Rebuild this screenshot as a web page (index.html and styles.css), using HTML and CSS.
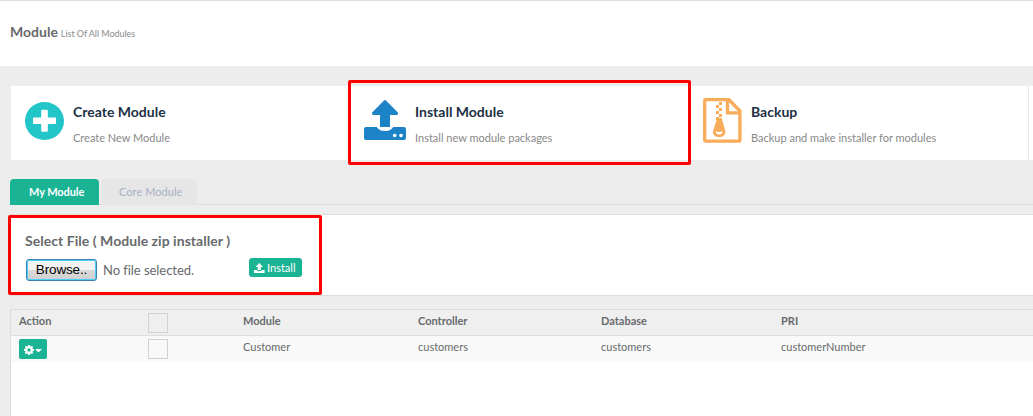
FILE: index.html
```html
<!DOCTYPE html>
<html lang="en">
<head>
<meta charset="utf-8">
<title>Module</title>
<link rel="stylesheet" href="styles.css">
</head>
<body>
<header class="page-header">
  <h1 class="page-title">Module</h1>
  <span class="page-subtitle">List Of All Modules</span>
</header>
<main class="content">
  <section class="cards">
    <article class="card">
      <svg class="card-icon icon-create" width="39" height="38" viewBox="0 0 39 39" preserveAspectRatio="none">
        <circle cx="19.5" cy="19.5" r="19.5" fill="#23c6c8"/>
        <path d="M17.200 8h4.600a1 1 0 0 1 1 1v7H30a1 1 0 0 1 1 1v4.600a1 1 0 0 1-1 1h-7.200V29.500a1 1 0 0 1-1 1h-4.600a1 1 0 0 1-1-1v-6.900H9a1 1 0 0 1-1-1V17a1 1 0 0 1 1-1h7.200V9a1 1 0 0 1 1-1z" fill="#fff"/>
      </svg>
      <div class="card-text">
        <h2 class="card-title">Create Module</h2>
        <p class="card-desc">Create New Module</p>
      </div>
    </article>
    <article class="card">
      <svg class="card-icon icon-install" width="42" height="40" viewBox="0 0 42 40">
        <g fill="#1c84c6">
          <path d="M20 .4Q21 -.4 22 .4L33.600 12.200Q35 14.500 32.600 15H26v12q0 4-5 4t-5-4V15H9.400Q7 14.500 8.400 12.200z"/>
          <path d="M2 27h11q2.500 4 8 4t8-4h11a2 2 0 0 1 2 2v9a2 2 0 0 1-2 2H2a2 2 0 0 1-2-2v-9a2 2 0 0 1 2-2z"/>
        </g>
        <path d="M13 27H29q-2.500 4-8 4t-8-4z" fill="#fff"/>
        <circle cx="30.700" cy="35.500" r="1.800" fill="#fff"/>
        <circle cx="37" cy="35.500" r="1.800" fill="#fff"/>
      </svg>
      <div class="card-text">
        <h2 class="card-title">Install Module</h2>
        <p class="card-desc">Install new module packages</p>
      </div>
      <div class="highlight highlight-card"></div>
    </article>
    <article class="card">
      <svg class="card-icon icon-backup" width="39" height="45" viewBox="0 0 39 45">
        <path d="M2.500 1.700h23.500L36.900 13v29.200a1 1 0 0 1-1 1H2.700a1 1 0 0 1-1-1V2.500a.8.8 0 0 1 .8-.8z" fill="#fff" stroke="#f8ac59" stroke-width="3.300"/>
        <path d="M24.500 2v12.800H37" fill="none" stroke="#f8ac59" stroke-width="3.300"/>
        <g fill="#f8ac59">
          <path d="M16 4h3v3h-3zM13 7h3v3h-3zM16 10h3v3h-3zM13 13h3v3h-3zM16 16h3v3h-3zM13 19h3v3h-3z"/>
          <path fill-rule="evenodd" d="M13.500 22h2.500v-2h3v3h.5L22.300 33c1 3.500-2.500 6.200-6.100 6.200S9.100 36.500 10.100 33zM12.700 33.500c0 2 1.700 2.900 3.500 2.900s3.500-.9 3.500-2.900q-1.200-.8-1.800.2-1.700.8-3.400 0-.6-1-1.800-.2z"/>
        </g>
      </svg>
      <div class="card-text">
        <h2 class="card-title">Backup</h2>
        <p class="card-desc">Backup and make installer for modules</p>
      </div>
    </article>
    <div class="card-next"></div>
  </section>
  <nav class="tabs">
    <a class="tab tab-active">My Module</a>
    <a class="tab">Core Module</a>
  </nav>
  <section class="upload">
    <h3 class="upload-title">Select File ( Module zip installer )</h3>
    <div class="upload-row">
      <button class="browse">Browse..</button>
      <span class="file-name">No file selected.</span>
      <button class="install">
        <svg width="11" height="10" viewBox="0 0 11 10" fill="#fff">
          <path d="M5.300 0L9 4H6.900v3H3.700V4H1.600zM0 6.900h2.700q.5 1.300 2.600 1.300T7.900 6.900H10.600V10H0z"/>
        </svg>
        <span>Install</span>
      </button>
    </div>
    <div class="highlight highlight-upload"></div>
  </section>
  <section class="grid">
    <div class="row row-head">
      <span>Action</span><i class="check"></i><span>Module</span><span>Controller</span><span>Database</span><span>PRI</span>
    </div>
    <div class="row row-body">
      <button class="gear">
        <svg width="10" height="10" viewBox="0 0 20 20">
          <g fill="#fff">
            <circle cx="10" cy="10" r="7.500"/>
            <path d="M8 0h4v20H8zM0 8h20v4H0z"/>
            <path d="M8 0h4v20H8zM0 8h20v4H0z" transform="rotate(45 10 10)"/>
          </g>
          <circle cx="10" cy="10" r="3.300" fill="#1ab394"/>
        </svg>
        <svg width="7" height="3" viewBox="0 0 7 3"><path d="M0 0h7L3.500 3.500z" fill="#fff"/></svg>
      </button>
      <i class="check"></i><span>Customer</span><span>customers</span><span>customers</span><span>customerNumber</span>
    </div>
  </section>
</main>
</body>
</html>
```
FILE: styles.css
```css
* { box-sizing: border-box; }
body {
  margin: 0;
  height: 416px;
  overflow: hidden;
  display: flex;
  flex-direction: column;
  background: #ededed;
  color: #676a6c;
  font-family: Lato, "Liberation Sans", sans-serif;
  font-size: 12px;
}
h1, h2, h3, p { margin: 0; }
button { border: 0; margin: 0; padding: 0; font-family: inherit; }
svg { display: block; flex: none; }
.page-header {
  flex: none;
  height: 66px;
  display: flex;
  align-items: baseline;
  gap: 3px;
  padding: 22px 0 0 10px;
  background: #fff;
  border-top: 1px solid #ddd;
}
.page-title { font-size: 14px; line-height: 18px; font-weight: 700; }
.page-subtitle { font-size: 9px; letter-spacing: -0.05px; color: #8a8c8e; }
.content {
  flex: 1;
  min-height: 0;
  display: flex;
  flex-direction: column;
  padding: 20px 0 0 10px;
}
.cards {
  flex: none;
  height: 74px;
  margin-left: 1px;
  display: grid;
  grid-template-columns: 339px 339px 339px 1fr;
  background: #fff;
}
.card { position: relative; display: flex; align-items: flex-start; padding-left: 14px; white-space: nowrap; }
.card-next { border-left: 1px solid #e7e7e7; }
.icon-create { margin: 16px 9px 0 0; }
.icon-install { margin: 14px 9px 0 0; }
.icon-backup { margin: 12px 9px 0 0; }
.card-text { padding-top: 17px; }
.card-title { font-size: 14px; line-height: 18px; font-weight: 700; color: #213045; }
.card-desc { margin-top: 9px; font-size: 11px; line-height: 16px; color: #888; }
.highlight { position: absolute; border: 3px solid #f00; border-radius: 2px; }
.highlight-card { left: -2px; top: -6px; width: 343px; height: 85px; z-index: 1; }
.highlight-upload { left: -3px; top: 0; width: 314px; height: 80px; }
.tabs {
  flex: none;
  display: flex;
  gap: 2px;
  height: 26px;
  margin-top: 19px;
  border-bottom: 1px solid #ddd;
}
.tab {
  height: 26px;
  width: 96px;
  padding-left: 18px;
  font-size: 11px;
  line-height: 26px;
  letter-spacing: 0.05px;
  border-radius: 4px 4px 0 0;
  background: #e6e6e6;
  color: #a7b1c2;
}
.tab-active { width: 89px; padding-left: 19px; letter-spacing: -0.1px; background: #1ab394; color: #fff; font-weight: 700; }
.upload {
  position: relative;
  flex: none;
  height: 82px;
  margin-top: 9px;
  padding: 17px 0 0 14px;
  background: #fff;
  border: 1px solid #ddd;
  border-right: 0;
}
.upload-title { font-size: 14px; line-height: 18px; font-weight: 700; letter-spacing: 0.04px; }
.upload-row { display: flex; align-items: flex-start; padding: 9px 0 0 1px; }
.browse {
  width: 71px;
  height: 22px;
  border: 1px solid #3c7fb1;
  border-radius: 3px;
  box-shadow: inset 0 0 0 1px #48d0f8;
  background: linear-gradient(#f3f3f3 50%, #dadada 51%, #cfcfcf);
  color: #000;
  font: 13.5px/20px "Liberation Sans", sans-serif;
  letter-spacing: -0.15px;
}
.file-name { margin-left: 6px; width: 146px; font-size: 13px; line-height: 22px; letter-spacing: -0.05px; }
.install {
  display: flex;
  align-items: center;
  gap: 2px;
  width: 53px;
  height: 19px;
  margin-top: -1px;
  padding-left: 5px;
  border-radius: 3px;
  background: #1ab394;
  color: #fff;
  font-size: 11px;
}
.grid {
  flex: 1;
  margin-top: 13px;
  border: 1px solid #ddd;
  border-width: 1px 0 0 1px;
  background: #fff;
}
.row {
  display: grid;
  grid-template-columns: 129px 95px 175px 183px 180px 1fr;
  height: 26px;
  padding-left: 8px;
  align-items: start;
  font-size: 11px;
  line-height: 22px;
}
.row-head { background: #efefef; border-bottom: 1px solid #ddd; font-weight: 700; }
.row-body { background: #f9f9f9; }
.check { width: 20px; height: 20px; margin-top: 3px; border: 1px solid #d5d0c9; }
.gear {
  display: flex;
  align-items: center;
  gap: 1px;
  width: 28px;
  height: 20px;
  margin-top: 3px;
  padding: 2px 0 0 5px;
  border-radius: 2px;
  background: #1ab394;
}
```
